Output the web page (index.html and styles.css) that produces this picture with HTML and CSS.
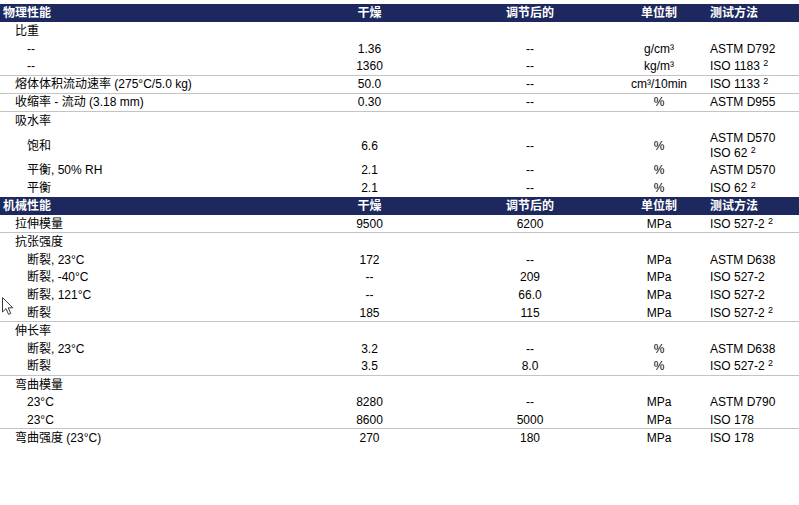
FILE: index.html
```html
<!DOCTYPE html>
<html lang="zh">
<head>
<meta charset="utf-8">
<title>物理性能</title>
<link rel="stylesheet" href="styles.css">
</head>
<body>
<div class="sheet">
  <div class="row head">
    <div class="c-label">物理性能</div><div class="c-dry">干燥</div><div class="c-cond">调节后的</div><div class="c-unit">单位制</div><div class="c-meth">测试方法</div>
  </div>
  <div class="row"><div class="c-label l1">比重</div></div>
  <div class="row"><div class="c-label l2">--</div><div class="c-dry">1.36</div><div class="c-cond">--</div><div class="c-unit">g/cm³</div><div class="c-meth">ASTM D792</div></div>
  <div class="row sep"><div class="c-label l2">--</div><div class="c-dry">1360</div><div class="c-cond">--</div><div class="c-unit">kg/m³</div><div class="c-meth">ISO 1183 <sup class="fn">2</sup></div></div>
  <div class="row sep"><div class="c-label l1">熔体体积流动速率 (275°C/5.0 kg)</div><div class="c-dry">50.0</div><div class="c-cond">--</div><div class="c-unit">cm³/10min</div><div class="c-meth">ISO 1133 <sup class="fn">2</sup></div></div>
  <div class="row sep"><div class="c-label l1">收缩率 - 流动 (3.18 mm)</div><div class="c-dry">0.30</div><div class="c-cond">--</div><div class="c-unit">%</div><div class="c-meth">ASTM D955</div></div>
  <div class="row"><div class="c-label l1">吸水率</div></div>
  <div class="row tall"><div class="c-label l2">饱和</div><div class="c-dry">6.6</div><div class="c-cond">--</div><div class="c-unit">%</div><div class="c-meth"><div class="ml">ASTM D570</div><div class="ml">ISO 62 <sup class="fn">2</sup></div></div></div>
  <div class="row"><div class="c-label l2">平衡, 50% RH</div><div class="c-dry">2.1</div><div class="c-cond">--</div><div class="c-unit">%</div><div class="c-meth">ASTM D570</div></div>
  <div class="row"><div class="c-label l2">平衡</div><div class="c-dry">2.1</div><div class="c-cond">--</div><div class="c-unit">%</div><div class="c-meth">ISO 62 <sup class="fn">2</sup></div></div>

  <div class="row head">
    <div class="c-label">机械性能</div><div class="c-dry">干燥</div><div class="c-cond">调节后的</div><div class="c-unit">单位制</div><div class="c-meth">测试方法</div>
  </div>
  <div class="row sep"><div class="c-label l1">拉伸模量</div><div class="c-dry">9500</div><div class="c-cond">6200</div><div class="c-unit">MPa</div><div class="c-meth">ISO 527-2 <sup class="fn">2</sup></div></div>
  <div class="row"><div class="c-label l1">抗张强度</div></div>
  <div class="row"><div class="c-label l2">断裂, 23°C</div><div class="c-dry">172</div><div class="c-cond">--</div><div class="c-unit">MPa</div><div class="c-meth">ASTM D638</div></div>
  <div class="row"><div class="c-label l2">断裂, -40°C</div><div class="c-dry">--</div><div class="c-cond">209</div><div class="c-unit">MPa</div><div class="c-meth">ISO 527-2</div></div>
  <div class="row"><div class="c-label l2">断裂, 121°C</div><div class="c-dry">--</div><div class="c-cond">66.0</div><div class="c-unit">MPa</div><div class="c-meth">ISO 527-2</div></div>
  <div class="row sep"><div class="c-label l2">断裂</div><div class="c-dry">185</div><div class="c-cond">115</div><div class="c-unit">MPa</div><div class="c-meth">ISO 527-2 <sup class="fn">2</sup></div></div>
  <div class="row"><div class="c-label l1">伸长率</div></div>
  <div class="row"><div class="c-label l2">断裂, 23°C</div><div class="c-dry">3.2</div><div class="c-cond">--</div><div class="c-unit">%</div><div class="c-meth">ASTM D638</div></div>
  <div class="row sep"><div class="c-label l2">断裂</div><div class="c-dry">3.5</div><div class="c-cond">8.0</div><div class="c-unit">%</div><div class="c-meth">ISO 527-2 <sup class="fn">2</sup></div></div>
  <div class="row"><div class="c-label l1">弯曲模量</div></div>
  <div class="row"><div class="c-label l2">23°C</div><div class="c-dry">8280</div><div class="c-cond">--</div><div class="c-unit">MPa</div><div class="c-meth">ASTM D790</div></div>
  <div class="row sep"><div class="c-label l2">23°C</div><div class="c-dry">8600</div><div class="c-cond">5000</div><div class="c-unit">MPa</div><div class="c-meth">ISO 178</div></div>
  <div class="row"><div class="c-label l1">弯曲强度 (23°C)</div><div class="c-dry">270</div><div class="c-cond">180</div><div class="c-unit">MPa</div><div class="c-meth">ISO 178</div></div>
</div>

<svg class="cursor" width="13" height="20" viewBox="0 0 13 20" aria-hidden="true">
  <path d="M1.5 1.5 L1.5 16 L5 12.6 L7.6 18.4 L9.8 17.4 L7.2 11.8 L11.8 11.8 Z" fill="#ffffff" stroke="#3a3a3a" stroke-width="1" stroke-linejoin="miter"/>
</svg>
</body>
</html>
```
FILE: styles.css
```css
html, body {
  margin: 0;
  padding: 0;
  background: #ffffff;
}

body {
  font-family: "Liberation Sans", Arial, "Noto Sans CJK SC", sans-serif;
  font-size: 12px;
  line-height: 14px;
  color: #000000;
}

.sheet {
  padding-top: 4px;
  width: 799px;
}

.row {
  display: grid;
  grid-template-columns: 330px 79px 201px 98px 1fr;
  align-items: center;
  height: 17.7px;
  box-sizing: border-box;
}

.row.tall {
  height: 32px;
}

.row.sep {
  border-bottom: 1px solid #c4c4c4;
  height: 18.2px;
}

.row.head {
  height: 18px;
  background: #1d285e;
  color: #ffffff;
  font-weight: bold;
}

.c-label {
  padding-left: 3px;
  white-space: nowrap;
}

.c-label.l1 {
  padding-left: 15px;
}

.c-label.l2 {
  padding-left: 27px;
}

.c-dry {
  text-align: center;
  white-space: nowrap;
}

.c-cond {
  padding-left: 41px;
  text-align: center;
  white-space: nowrap;
}

.c-unit {
  text-align: center;
  white-space: nowrap;
}

.c-meth {
  padding-left: 2px;
  white-space: nowrap;
}

.ml {
  height: 15px;
  line-height: 15px;
}

.fn {
  font-size: 9px;
  line-height: 0;
  vertical-align: 4px;
}

.cursor {
  position: absolute;
  left: 1px;
  top: 296px;
}
```
